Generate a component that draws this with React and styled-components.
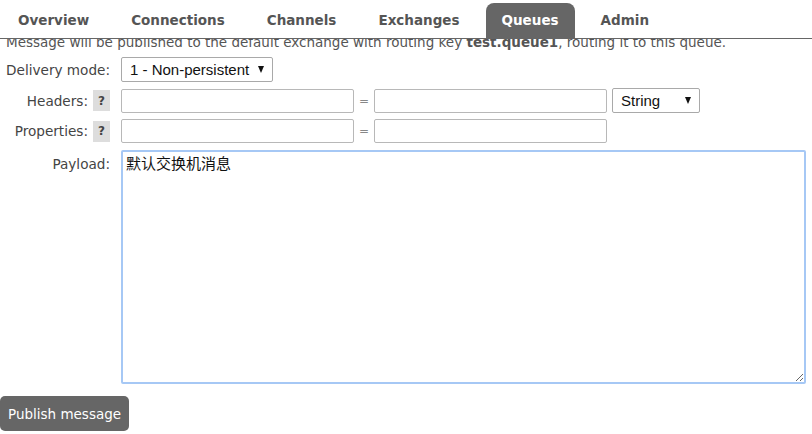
import React from 'react';
import styled, {createGlobalStyle} from 'styled-components';

const GlobalStyle = createGlobalStyle`
  html, body {
    margin: 0;
    padding: 0;
    background: #ffffff;
  }
  body {
    font-family: "DejaVu Sans", Verdana, sans-serif;
    font-size: 13px;
    color: #484848;
  }
`;

const Page = styled('div')`
  width: 812px;
  height: 434px;
  overflow: hidden;
  display: flex;
  flex-direction: column;
`;

// #region tabs
const TabBar = styled('ul')`
  list-style: none;
  margin: 0;
  padding: 3px 0 0 2px;
  display: flex;
  border-bottom: 1px solid #666666;
  position: relative;
  z-index: 1;
  background: #ffffff;
`;

const Tab = styled('li')`
  margin-right: 10px;
  padding: 0 16px;
  height: 35px;
  line-height: 35px;
  font-weight: bold;
  font-size: 13.5px;
  color: ${p => (p.$active ? '#ffffff' : '#555555')};
  background: ${p => (p.$active ? '#666666' : 'transparent')};
  border-radius: 8px 8px 0 0;
`;
// #endregion

const Notice = styled('p')`
  margin: -5px 0 0 6px;
  font-size: 13.5px;
  line-height: 16px;
  color: #555555;
  white-space: nowrap;
`;

const Form = styled('div')`
  display: grid;
  grid-template-columns: 110px 1fr;
  column-gap: 11px;
  row-gap: 6px;
  margin-top: 7px;
  padding-right: 7px;
`;

const Label = styled('div')`
  display: flex;
  justify-content: flex-end;
  align-items: ${p => (p.$top ? 'flex-start' : 'center')};
  gap: 5px;
  font-size: 13.6px;
  color: #444444;
  white-space: nowrap;
  padding-top: ${p => (p.$top ? '7px' : '0')};
`;

const Help = styled('span')`
  display: inline-flex;
  align-items: center;
  justify-content: center;
  width: 17px;
  height: 21px;
  background: #dddddd;
  color: #444444;
  font-weight: bold;
  font-size: 12px;
`;

const Fields = styled('div')`
  display: flex;
  align-items: center;
  gap: 5px;
  padding-top: ${p => (p.$shift ? '1px' : '0')};
`;

const TextInput = styled('input')`
  box-sizing: border-box;
  width: 233px;
  height: 24px;
  border: 1px solid #b8b8b8;
  border-radius: 2px;
  padding: 2px 4px;
  font-family: "Liberation Sans", Arial, sans-serif;
  font-size: 14px;
`;

const Equals = styled('span')`
  width: 10px;
  color: #888888;
  font-size: 12px;
  text-align: center;
`;

const SelectBox = styled('div')`
  box-sizing: border-box;
  width: ${p => p.$width}px;
  height: 25px;
  display: flex;
  align-items: center;
  justify-content: space-between;
  padding: 0 8px 0 8px;
  border: 1px solid #a9a9a9;
  border-radius: 2px;
  background: #ffffff;
  font-family: "Liberation Sans", Arial, sans-serif;
  font-size: 15px;
  color: #111111;
`;

const Arrow = styled('span')`
  width: 0;
  height: 0;
  border-left: 3.5px solid transparent;
  border-right: 3.5px solid transparent;
  border-top: 7px solid #111111;
`;

const Payload = styled('textarea')`
  box-sizing: border-box;
  width: 685px;
  height: 234px;
  border: 2px solid #a6c8f5;
  border-radius: 2px;
  padding: 1px 3px 0;
  font-family: "Noto Sans CJK SC", "DejaVu Sans", sans-serif;
  font-size: 15px;
  line-height: 20px;
  color: #111111;
  outline: none;
  resize: both;
  caret-color: #111111;
`;

const Publish = styled('button')`
  align-self: flex-start;
  margin-top: 12px;
  height: 35px;
  padding: 0 8px;
  border: none;
  border-radius: 5px;
  background: #666666;
  color: #ffffff;
  font-family: "DejaVu Sans", Verdana, sans-serif;
  font-size: 13.5px;
`;

const tabs = ['Overview', 'Connections', 'Channels', 'Exchanges', 'Queues', 'Admin'];

export default function App() {
  return (
    <Page>
      <GlobalStyle/>
      <TabBar>
        {tabs.map(t => (
          <Tab key={t} $active={t === 'Queues'}>{t}</Tab>
        ))}
      </TabBar>
      <Notice>
        Message will be published to the default exchange with routing key <b>test.queue1</b>, routing it to this queue.
      </Notice>
      <Form>
        <Label>Delivery mode:</Label>
        <Fields>
          <SelectBox $width={152}>1 - Non-persistent <Arrow/></SelectBox>
        </Fields>

        <Label>Headers: <Help>?</Help></Label>
        <Fields>
          <TextInput/>
          <Equals>=</Equals>
          <TextInput/>
          <SelectBox $width={88}>String <Arrow/></SelectBox>
        </Fields>

        <Label>Properties: <Help>?</Help></Label>
        <Fields>
          <TextInput/>
          <Equals>=</Equals>
          <TextInput/>
        </Fields>

        <Label $top>Payload:</Label>
        <Fields $shift>
          <Payload defaultValue="默认交换机消息" autoFocus/>
        </Fields>
      </Form>
      <Publish>Publish message</Publish>
    </Page>
  );
}
